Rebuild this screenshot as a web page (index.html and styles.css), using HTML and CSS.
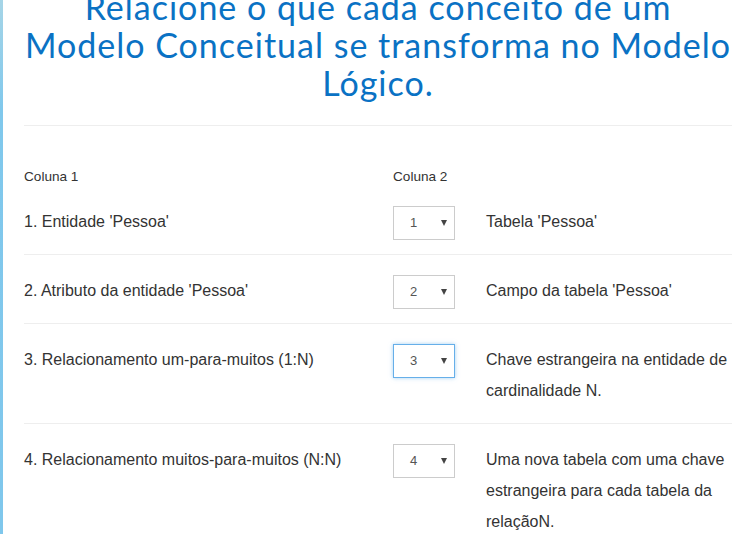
FILE: index.html
```html
<!DOCTYPE html>
<html lang="pt">
<head>
<meta charset="utf-8">
<title>Relacione colunas</title>
<link rel="stylesheet" href="styles.css">
</head>
<body>
<div class="page">
  <div class="strip"></div>
  <main class="main">
    <h1 class="title">Relacione o que cada conceito de um<br>Modelo Conceitual se transforma no Modelo<br>Lógico.</h1>
    <hr class="rule">
    <div class="head">
      <span>Coluna 1</span>
      <span>Coluna 2</span>
      <span></span>
    </div>
    <div class="row">
      <div class="left">1. Entidade 'Pessoa'</div>
      <div class="sel"><span class="val">1</span><span class="arr"></span></div>
      <div class="right">Tabela 'Pessoa'</div>
    </div>
    <div class="row line">
      <div class="left">2. Atributo da entidade 'Pessoa'</div>
      <div class="sel"><span class="val">2</span><span class="arr"></span></div>
      <div class="right">Campo da tabela 'Pessoa'</div>
    </div>
    <div class="row line">
      <div class="left">3. Relacionamento um-para-muitos (1:N)</div>
      <div class="sel focus"><span class="val">3</span><span class="arr"></span></div>
      <div class="right">Chave estrangeira na entidade de cardinalidade N.</div>
    </div>
    <div class="row line">
      <div class="left">4. Relacionamento muitos-para-muitos (N:N)</div>
      <div class="sel"><span class="val">4</span><span class="arr"></span></div>
      <div class="right">Uma nova tabela com uma chave estrangeira para cada tabela da relaçãoN.</div>
    </div>
  </main>
</div>
</body>
</html>
```

FILE: styles.css
```css
html, body {
  margin: 0;
  padding: 0;
  background: #fff;
}
.page {
  display: flex;
  min-height: 534px;
  font-family: "Liberation Sans", Arial, sans-serif;
  color: #333;
}
.strip {
  width: 3px;
  flex: none;
  background: linear-gradient(#a6d5e7 0, #80c8ec 110px, #7fc7ec 100%);
}
.main {
  flex: 1;
  padding: 0 20px 0 21px;
}
.title {
  margin: -12px 0 0 0;
  font-family: Lato, "Open Sans", sans-serif;
  font-weight: 400;
  font-size: 34px;
  line-height: 38px;
  letter-spacing: 1px;
  white-space: nowrap;
  color: #0a72c4;
  text-align: center;
}
.rule {
  margin: 23px 0 0 0;
  border: 0;
  border-top: 1px solid #eee;
  height: 0;
}
.head {
  display: grid;
  grid-template-columns: 369px 93px 1fr;
  margin-top: 42px;
  font-size: 13.6px;
  line-height: 18px;
}
.row {
  display: grid;
  grid-template-columns: 369px 93px 1fr;
  align-items: start;
  padding: 20px 0 13px 0;
  font-size: 16px;
  line-height: 31px;
}
.row.line {
  border-top: 1px solid #eee;
}
.left, .right {
  margin-bottom: 4px;
}
.sel {
  box-sizing: border-box;
  width: 62px;
  height: 34px;
  border: 1px solid #ccc;
  display: flex;
  align-items: center;
  padding: 0 0 0 16px;
  font-size: 13px;
  color: #555;
}
.sel.focus {
  border-color: #66afe9;
  box-shadow: 0 0 4px rgba(102, 175, 233, 0.6);
}
.val {
  width: 31px;
  line-height: 16px;
}
.arr {
  width: 0;
  height: 0;
  border-left: 3.5px solid transparent;
  border-right: 3.5px solid transparent;
  border-top: 6px solid #444;
}
```
